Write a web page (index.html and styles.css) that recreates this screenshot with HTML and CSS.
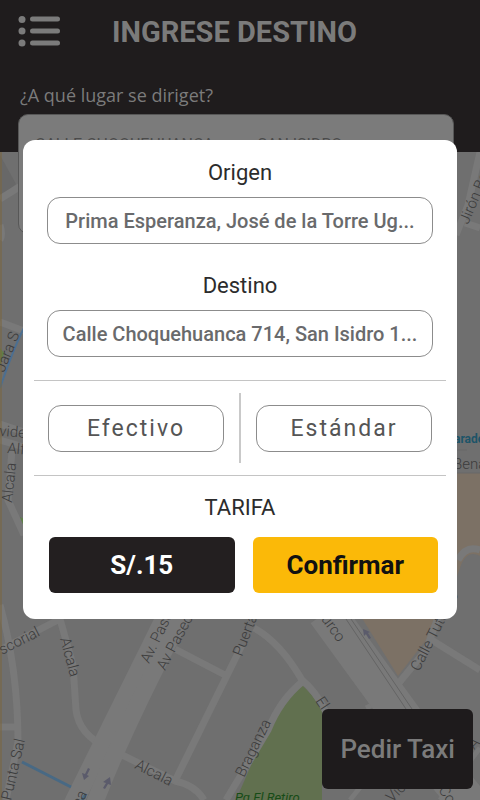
FILE: index.html
```html
<!DOCTYPE html>
<html lang="es">
<head>
    <meta charset="UTF-8">
    <meta name="viewport" content="width=device-width, initial-scale=1.0">
    <title>Ingrese destino</title>
    <link rel="stylesheet" href="styles.css">
</head>
<body>
    <div class="screen">
        <header class="header">
            <div class="title-bar">
                <button class="menu-button" type="button" aria-label="Menú">
                    <svg width="42" height="32" viewBox="0 0 42 32" fill="#7b7b7b">
                        <circle cx="4" cy="3.5" r="3.5"/>
                        <circle cx="4" cy="15" r="3.5"/>
                        <circle cx="4" cy="27" r="3.5"/>
                        <rect x="12" y="0.5" width="30" height="5" rx="2.5"/>
                        <rect x="12" y="12.5" width="30" height="5" rx="2.5"/>
                        <rect x="12" y="24.5" width="30" height="5" rx="2.5"/>
                    </svg>
                </button>
                <h1>INGRESE DESTINO</h1>
            </div>
            <label class="search-label" for="search">¿A qué lugar se diriget?</label>
            <textarea class="search-box" id="search">CALLE CHOQUEHUANCA           SAN ISIDRO</textarea>
        </header>

        <main class="map">
            <svg class="map-drawing" viewBox="0 152 480 648" preserveAspectRatio="xMinYMin slice">
                <!-- blocks and parks -->
                <path d="M0 155 L16 184 L0 197Z" fill="#686868"/>
                <path d="M456 473 H480 V556 Q466 549 460 568 L452 590 L426 640 L398 676 L360 615Z" fill="#7c7165"/>
                <path d="M302 685 Q312 694 322 709 V800 H236 L262 740 Q280 707 302 685Z" fill="#61704f"/>
                <path d="M0 348 L4 353 L0 366Z M20 517 L24 519 V530Z" fill="#5e8048"/>

                <!-- streets -->
                <g fill="none" stroke="#797979" stroke-width="7">
                    <path d="M0 199 L24 184"/>
                    <path d="M0 240 Q3 235 0 225 M0 322 L24 331"/>
                    <path d="M0 424 L24 432 M0 440 L24 447 M12 450 L8 500 L24 535"/>
                    <path d="M0 605 Q18 670 18 742 L6 800 M0 727 H17"/>
                    <path d="M0 650 L60 619 M60 619 L73 665 L76 710 Q79 735 108 748 L175 781 Q195 785 204 800"/>
                    <path d="M175 649 L225 675 M242 645 L174 783"/>
                    <path d="M254 628 Q280 642 302 680 Q315 690 326 712 M302 682 Q280 700 268 730 L226 800"/>
                    <path d="M480 152 L468 205 L456 235 M465 223 L480 228"/>
                    <path d="M430 639 L480 670 M450 585 L426 650 L398 684 M480 550 Q466 545 458 560"/>
                    <path d="M366 708 L382 700 M350 800 L370 775 M480 748 L440 800" stroke-width="5"/>
                </g>
                <g fill="none" stroke="#797979">
                    <path d="M168 612 L72 806" stroke-width="19"/>
                    <path d="M184 612 Q120 735 92 810" stroke-width="17"/>
                    <path d="M326 612 L430 755 L475 810" stroke-width="38"/>
                </g>
                <path d="M351 619 L412 709 M346 619 L406 709" fill="none" stroke="#646464"/>
                <path d="M456 450 H467 M456 473 H480" stroke="#686868"/>

                <!-- blue lines and direction arrows -->
                <path d="M22 762 L71 787 M86 794 L82 800" stroke="#486984" stroke-width="3"/>
                <path d="M24 328 Q14 347 0 388" fill="none" stroke="#4c6f91" stroke-width="2"/>
                <g fill="#5b5b6b">
                    <path d="M88 768 L90 769 L87 775 L89 776 L84 780 L82 773 L85 774Z"/>
                    <path d="M105 789 L103 788 L106 783 L103 782 L110 777 L111 785 L108 784Z"/>
                    <path d="M371 638 L369 639 L366 634 L364 636 L363 629 L370 632 L368 633Z"/>
                </g>
                <path d="M1 152 V800" stroke="#7c663c"/>

                <!-- street names -->
                <g class="street-name">
                    <text transform="translate(468 225) rotate(-67)">Jirón Badajoz</text>
                    <text transform="translate(4 373) rotate(-68)">Jara S</text>
                    <text transform="translate(-9 435) rotate(5)">avides</text>
                    <text transform="translate(7 453) rotate(5)">Alfredo</text>
                    <text transform="translate(12 503) rotate(-84)">Alcala</text>
                    <text x="453" y="469">Bena</text>
                    <text transform="translate(2 655) rotate(-27)">scorial</text>
                    <text transform="translate(60 639) rotate(75)">Alcala</text>
                    <text transform="translate(149 664) rotate(-64)">Av. Paseo</text>
                    <text transform="translate(165 671) rotate(-62)">Av Paseo</text>
                    <text transform="translate(242 657) rotate(-69)">Puerta</text>
                    <text transform="translate(307 600) rotate(54)">El Turco</text>
                    <text transform="translate(419 672) rotate(-63)">Calle Tutumo</text>
                    <text transform="translate(315 701) rotate(56)">El</text>
                    <text transform="translate(134 768) rotate(27)">Alcala</text>
                    <text transform="translate(11 801) rotate(-77)">Punta Sal</text>
                    <text transform="translate(80 808) rotate(-63)">na</text>
                    <text transform="translate(244 778) rotate(-64)">Braganza</text>
                    <text transform="translate(392 803) rotate(-45)">Vic</text>
                    <text transform="translate(438 790) rotate(55)">Co</text>
                    <text transform="translate(474 750) rotate(-45)">A</text>
                </g>
                <text class="stop-name" x="454" y="443">arade</text>
                <text class="park-name" x="235" y="802">Pq El Retiro</text>
            </svg>
            <button class="taxi-button" type="button">Pedir Taxi</button>
        </main>
    </div>

    <div class="overlay">
        <form class="dialog" role="dialog">
            <label class="field-label" for="origin">Origen</label>
            <input class="field" id="origin" type="text" value="Prima Esperanza, José de la Torre Ug...">

            <label class="field-label second" for="destination">Destino</label>
            <input class="field" id="destination" type="text" value="Calle Choquehuanca 714, San Isidro 1...">

            <div class="options">
                <button class="option" type="button">Efectivo</button>
                <div class="separator"></div>
                <button class="option" type="button">Estándar</button>
            </div>

            <div class="fare-title">TARIFA</div>
            <div class="actions">
                <button class="fare" type="button">S/.15</button>
                <button class="confirm" type="button">Confirmar</button>
            </div>
        </form>
    </div>
</body>
</html>
```
FILE: styles.css
```css
* {
    box-sizing: border-box;
}
body {
    margin: 0;
    font-family: Roboto, "Liberation Sans", sans-serif;
    background: #6f6f6f;
}
button {
    font-family: inherit;
    padding: 0;
    border: none;
    cursor: pointer;
}
.screen {
    min-height: 100vh;
    display: flex;
    flex-direction: column;
}

/* Header */
.header {
    position: relative;
    z-index: 1;
    height: 152px;
    padding: 12px 26px 0 18px;
    background: #1f1c1d;
}
.title-bar {
    display: flex;
    align-items: center;
    gap: 52px;
    height: 40px;
}
.menu-button {
    display: flex;
    background: none;
}
h1 {
    margin: 0;
    font-size: 29px;
    font-weight: bold;
    line-height: 40px;
    color: #7b7b7b;
}
.search-label {
    display: block;
    margin: 31px 0 7px 2px;
    font-family: "Open Sans", "Noto Sans", sans-serif;
    font-size: 18px;
    line-height: 24px;
    color: #7b7b7b;
}
.search-box {
    display: block;
    width: 100%;
    height: 120px;
    padding: 16px;
    border: 1px solid #575757;
    border-radius: 10px;
    background: #7b7b7b;
    color: #4b4b4b;
    font-family: inherit;
    font-size: 16px;
    line-height: 28px;
    resize: none;
}

/* Map */
.map {
    position: relative;
    flex: 1;
    display: flex;
    align-items: flex-end;
    justify-content: flex-end;
    padding: 0 7px 11px;
    overflow: hidden;
}
.map-drawing {
    position: absolute;
    inset: 0;
    width: 100%;
    height: 100%;
}
.street-name {
    font-size: 15px;
    font-weight: 300;
    fill: #3c3c3c;
}
.stop-name {
    font-size: 12px;
    font-weight: bold;
    fill: #1d5468;
}
.park-name {
    font-size: 13px;
    font-style: italic;
    fill: #174c17;
}
.taxi-button {
    position: relative;
    padding: 0 18px;
    height: 80px;
    border-radius: 6px;
    background: #1e1b1c;
    color: #7b7b7b;
    font-size: 26px;
    font-weight: 500;
}

/* Dialog */
.overlay {
    position: fixed;
    inset: 0;
    z-index: 2;
    display: flex;
    align-items: center;
    padding: 0 23px 41px;
}
.dialog {
    flex: 1;
    display: flex;
    flex-direction: column;
    padding: 19px 11px 26px;
    border-radius: 12px;
    background: white;
    text-align: center;
}
.field-label,
.fare-title {
    font-size: 22px;
    line-height: 28px;
    color: #2c2c2c;
}
.field-label.second {
    margin-top: 28px;
}
.field {
    height: 47px;
    margin: 10px 13px 0;
    padding: 0 8px;
    border: 1px solid #8c8c8c;
    border-radius: 13px;
    background: white;
    color: #696a6c;
    font-family: inherit;
    font-size: 20px;
    font-weight: 500;
    text-align: center;
}
.options {
    display: flex;
    align-items: center;
    gap: 15px;
    margin-top: 23px;
    padding: 12px 14px;
    border-top: 1px solid #c4c4c4;
    border-bottom: 1px solid #c4c4c4;
}
.option {
    flex: 1;
    height: 47px;
    border: 1px solid #8c8c8c;
    border-radius: 13px;
    background: white;
    color: #555;
    font-size: 23px;
    letter-spacing: 2px;
}
.separator {
    width: 2px;
    height: 70px;
    background: #c9c9c9;
}
.fare-title {
    margin: 18px 0 15px;
}
.actions {
    display: flex;
    gap: 18px;
    padding: 0 8px 0 15px;
}
.fare,
.confirm {
    flex: 1;
    height: 56px;
    border-radius: 6px;
    font-size: 26px;
    font-weight: bold;
}
.fare {
    background: #231f20;
    color: white;
}
.confirm {
    background: #fbb908;
    color: #111;
}
```
